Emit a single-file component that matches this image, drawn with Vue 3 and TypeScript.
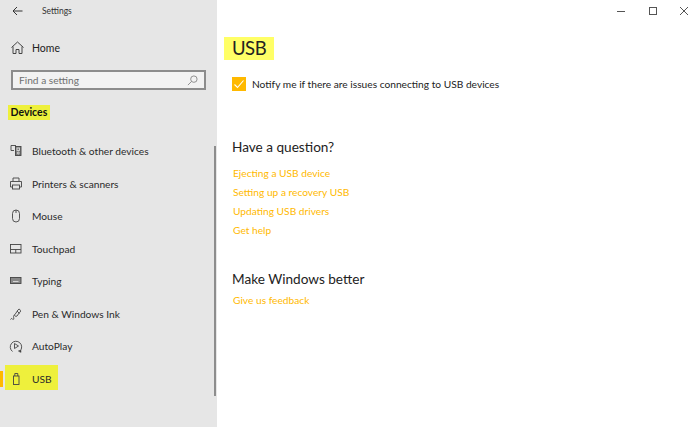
<script setup lang="ts">
interface NavItem { label: string; icon: string; active?: boolean }
const nav: NavItem[] = [
  { label: 'Bluetooth & other devices', icon: 'bt' },
  { label: 'Printers & scanners', icon: 'printer' },
  { label: 'Mouse', icon: 'mouse' },
  { label: 'Touchpad', icon: 'touchpad' },
  { label: 'Typing', icon: 'typing' },
  { label: 'Pen & Windows Ink', icon: 'pen' },
  { label: 'AutoPlay', icon: 'autoplay' },
  { label: 'USB', icon: 'usb', active: true },
]
const questionLinks = ['Ejecting a USB device', 'Setting up a recovery USB', 'Updating USB drivers', 'Get help']
</script>

<template>
  <div class="window">
    <aside class="sidebar">
      <div class="titlebar">
        <svg class="back" width="11" height="10" viewBox="0 0 11 10" fill="none" stroke="#333" stroke-width="1">
          <path d="M10.500 5H1M5 1 1 5l4 4" />
        </svg>
        <span class="app-title">Settings</span>
      </div>
      <div class="home">
        <svg class="ico" width="13" height="13" viewBox="0 0 13 13" fill="none" stroke="#444" stroke-width="1">
          <path d="M.5 6.500 6.500 1l6 5.500M2 5.500v7h3V8.500h3v4h3v-7" />
        </svg>
        <span>Home</span>
      </div>
      <div class="search">
        <span>Find a setting</span>
        <svg width="11" height="11" viewBox="0 0 12 12" fill="none" stroke="#888" stroke-width="1">
          <circle cx="7.500" cy="4.500" r="3.500" />
          <path d="M5 7 1 11" />
        </svg>
      </div>
      <div class="section"><span class="section-label">Devices</span></div>
      <nav class="nav">
        <div v-for="item in nav" :key="item.label" class="nav-row" :class="{ active: item.active }">
          <span v-if="item.active" class="accent"></span>
          <svg class="ico" width="14" height="14" viewBox="0 0 14 14" fill="none" stroke="#444" stroke-width="0.900">
            <template v-if="item.icon === 'bt'">
              <path d="M7 1.500H2V6.500H5" />
              <rect x="6.500" y="2.500" width="5.500" height="9" fill="#777" />
              <rect x="8" y="4" width="2.500" height="2.500" stroke="#ddd" />
              <circle cx="9.250" cy="9" r="1" stroke="#ddd" />
            </template>
            <template v-else-if="item.icon === 'printer'">
              <path d="M4 4V1h6v3M3.500 10H1.500V4.500h11V10h-2" />
              <rect x="3.500" y="8" width="7" height="4" />
            </template>
            <template v-else-if="item.icon === 'mouse'">
              <rect x="3.500" y="1" width="7" height="12" rx="3.500" />
              <path d="M7 1v3" />
            </template>
            <template v-else-if="item.icon === 'touchpad'">
              <rect x="1.500" y="2.500" width="10.500" height="8.500" />
              <path d="M1.500 7.500h10.500M6.750 7.500V11" />
            </template>
            <template v-else-if="item.icon === 'typing'">
              <rect x="1.500" y="3.500" width="10.500" height="6" fill="#888" />
              <path d="M4 7.500h5.500" stroke="#ddd" />
            </template>
            <template v-else-if="item.icon === 'pen'">
              <path d="M1.500 12.500c1-1.500 1.500-1 2-.3s1.500 .3 1.300-1-.8-2 1-3.700 2.500-4.500 4.200-5.500c1.500 .7 1.800 1.800 1.300 3-1.800 .8-2 2.800-3.300 4-1.300 .8-2.500 .2-2.500-1.300" />
              <path d="M8 4l2.500 2.500" />
            </template>
            <template v-else-if="item.icon === 'autoplay'">
              <path d="M3.500 12.500A5.700 5.700 0 1 1 11 12" />
              <path d="M5.500 4.500v5L9.500 7z" />
              <path d="M9.500 12h2v1.500" stroke-width="1.500" />
            </template>
            <template v-else>
              <rect x="4.500" y="4" width="5.500" height="8.500" />
              <path d="M5.800 4V1.500h3V4" />
            </template>
          </svg>
          <span class="nav-label">{{ item.label }}</span>
        </div>
      </nav>
      <div class="scrollbar"></div>
    </aside>

    <main class="content">
      <div class="controls">
        <svg width="12" height="12" viewBox="0 0 12 12" fill="none" stroke="#555"><path d="M1 6.500h8" /></svg>
        <svg width="12" height="12" viewBox="0 0 12 12" fill="none" stroke="#555"><rect x="2.500" y="2.500" width="7" height="7" /></svg>
        <svg width="12" height="12" viewBox="0 0 12 12" fill="none" stroke="#555"><path d="M2 2l8 8M10 2l-8 8" /></svg>
      </div>
      <h1 class="page-title"><span>USB</span></h1>
      <label class="check-row">
        <span class="check">
          <svg width="14" height="14" viewBox="0 0 14 14" fill="none" stroke="#fff" stroke-width="1.100"><path d="M2.500 7.500l3 3 6-7" /></svg>
        </span>
        <span>Notify me if there are issues connecting to USB devices</span>
      </label>
      <section class="question">
        <h2>Have a question?</h2>
        <a v-for="l in questionLinks" :key="l" class="link">{{ l }}</a>
      </section>
      <section class="better">
        <h2>Make Windows better</h2>
        <a class="link">Give us feedback</a>
      </section>
    </main>
  </div>
</template>

<style>
html, body { margin: 0; background: #fff; }
</style>

<style scoped>
.window {
  display: flex;
  width: 700px;
  height: 427px;
  overflow: hidden;
  font-family: "Lato", "Open Sans", sans-serif;
  color: #222;
  background: #fff;
}
.sidebar {
  position: relative;
  flex: 0 0 217px;
  display: flex;
  flex-direction: column;
  background: #e6e6e6;
}
.titlebar {
  display: flex;
  align-items: center;
  height: 22px;
  padding-left: 12px;
}
.back { margin-right: 19px; }
.app-title { font-size: 8.5px; color: #333; }
.home {
  display: flex;
  align-items: center;
  gap: 8px;
  margin-top: 19px;
  padding-left: 11px;
  font-size: 10.5px;
}
.search {
  display: flex;
  align-items: center;
  justify-content: space-between;
  box-sizing: border-box;
  width: 195px;
  height: 20px;
  margin: 16px 0 0 11px;
  padding: 0 6px 0 6px;
  border: 2px solid #8c8c8c;
  background: #f2f2f2;
  font-size: 10.2px;
  color: #707070;
}
.section { margin: 10px 0 0 8px; }
.section-label {
  display: inline-block;
  padding: 0 2.500px;
  background: #eef03c;
  font-size: 10.5px;
  font-weight: 700;
  line-height: 15px;
  color: #111;
}
.nav { margin-top: 15px; }
.nav-row {
  position: relative;
  display: flex;
  align-items: center;
  height: 32.5px;
  padding-left: 9px;
  font-size: 10.2px;
  color: #2a2a2a;
}
.nav-row .ico { flex: none; }
.nav-label { margin-left: 9px; }
.nav-row.active::before {
  content: "";
  position: absolute;
  left: 5px;
  top: 2.500px;
  width: 53px;
  height: 25px;
  background: #eef03c;
}
.nav-row.active > * { position: relative; }
.accent {
  position: absolute !important;
  left: 0;
  top: 8.500px;
  width: 3px;
  height: 16px;
  background: #ffb900;
}
.scrollbar {
  position: absolute;
  left: 214px;
  top: 146px;
  width: 2px;
  height: 250px;
  background: #8d8d8d;
}
.content {
  position: relative;
  flex: 1;
  padding-left: 15px;
}
.controls {
  position: absolute;
  top: 5px;
  right: 10px;
  display: flex;
  gap: 19px;
}
.page-title {
  margin: 37px 0 0 -8px;
  font-size: 18.5px;
  font-weight: 400;
  line-height: 23px;
}
.page-title span {
  display: inline-block;
  padding: 0 7.500px 0 8px;
  letter-spacing: -0.5px;
  background: #ffff66;
  color: #222;
}
.check-row {
  display: flex;
  align-items: center;
  gap: 6px;
  margin-top: 17px;
  font-size: 10.2px;
  line-height: 14px;
}
.check {
  display: block;
  width: 14px;
  height: 14px;
  background: #ffb900;
}
.check svg { display: block; }
.question { margin-top: 47px; }
h2 {
  margin: 0 0 7px;
  font-size: 13.6px;
  font-weight: 400;
  line-height: 19px;
  color: #222;
}
.link {
  display: block;
  height: 19px;
  line-height: 19px;
  margin-left: 1px;
  font-size: 10.2px;
  color: #ffb900;
}
.better { margin-top: 30px; }
.better h2 { margin-bottom: 2px; }
</style>
